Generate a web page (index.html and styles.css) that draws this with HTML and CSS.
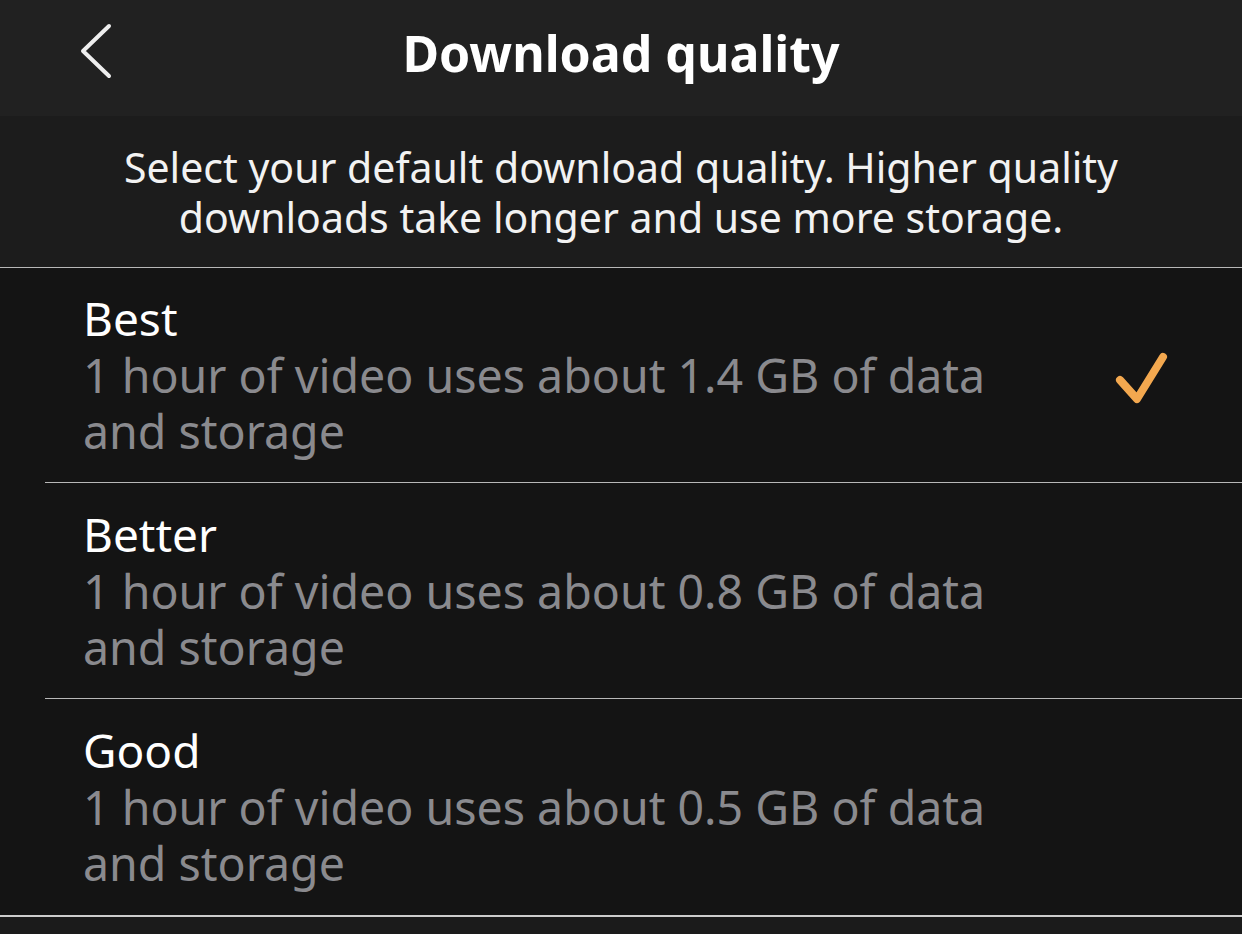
FILE: index.html
```html
<!DOCTYPE html>
<html lang="en">
<head>
  <meta charset="UTF-8">
  <meta name="viewport" content="width=device-width, initial-scale=1.0">
  <title>Download quality</title>
  <link rel="stylesheet" href="styles.css">
</head>
<body>
  <div class="screen">
    <div class="nav-bar">
      <svg class="back-icon" width="40" height="60" viewBox="0 0 40 60" fill="none" xmlns="http://www.w3.org/2000/svg">
        <path d="M29 4L3 29L29 54" stroke="#eeeeee" stroke-width="4" stroke-linecap="round" stroke-linejoin="round"/>
      </svg>
      <h1 class="nav-title">Download quality</h1>
    </div>

    <div class="intro">
      Select your default download quality. Higher quality downloads take longer and use more storage.
    </div>

    <div class="option-list">
      <div class="option">
        <div class="option-text">
          <div class="option-name">Best</div>
          <div class="option-desc">1 hour of video uses about 1.4 GB of data and storage</div>
        </div>
        <svg class="check-icon" width="60" height="60" viewBox="0 0 60 60" fill="none" xmlns="http://www.w3.org/2000/svg">
          <path d="M8 30L25 49L51 7" stroke="#f3a84f" stroke-width="8" stroke-linecap="round" stroke-linejoin="round"/>
        </svg>
      </div>

      <div class="option">
        <div class="option-text">
          <div class="option-name">Better</div>
          <div class="option-desc">1 hour of video uses about 0.8 GB of data and storage</div>
        </div>
      </div>

      <div class="option">
        <div class="option-text">
          <div class="option-name">Good</div>
          <div class="option-desc">1 hour of video uses about 0.5 GB of data and storage</div>
        </div>
      </div>
    </div>
  </div>
</body>
</html>
```

FILE: styles.css
```css
body {
  font-family: "Noto Sans", "Open Sans", sans-serif;
  margin: 0;
  padding: 0;
  background-color: #1b1b1b;
  color: #ffffff;
  overflow: hidden;
}

.screen {
  width: 1242px;
  height: 934px;
  display: flex;
  flex-direction: column;
}

.nav-bar {
  height: 116px;
  background-color: #212121;
  display: flex;
  align-items: center;
  justify-content: center;
  position: relative;
}

.back-icon {
  position: absolute;
  left: 80px;
  top: 22px;
}

.nav-title {
  font-size: 50px;
  font-weight: 700;
  margin: 0 0 10px;
  color: #ffffff;
}

.intro {
  background-color: #1c1c1c;
  font-size: 41px;
  line-height: 50px;
  color: #f2f2f2;
  text-align: center;
  padding: 26px 100px 25px;
  border-bottom: 1px solid #b8b8b8;
}

.option-list {
  background-color: #141414;
  padding-left: 45px;
  border-bottom: 2px solid #cccccc;
}

.option {
  display: flex;
  align-items: center;
  justify-content: space-between;
  padding: 22px 45px 24px 38px;
  height: 216px;
  box-sizing: border-box;
  border-bottom: 1px solid #b8b8b8;
}

.option:first-child {
  height: 215px;
}

.option:last-child {
  border-bottom: none;
}

.option-text {
  width: 960px;
}

.option-name {
  font-size: 46px;
  line-height: 58px;
  color: #ffffff;
}

.option-desc {
  font-size: 46.5px;
  line-height: 56px;
  color: #8a8a8e;
}

.check-icon {
  margin-right: 25px;
  margin-top: 12px;
}
```
